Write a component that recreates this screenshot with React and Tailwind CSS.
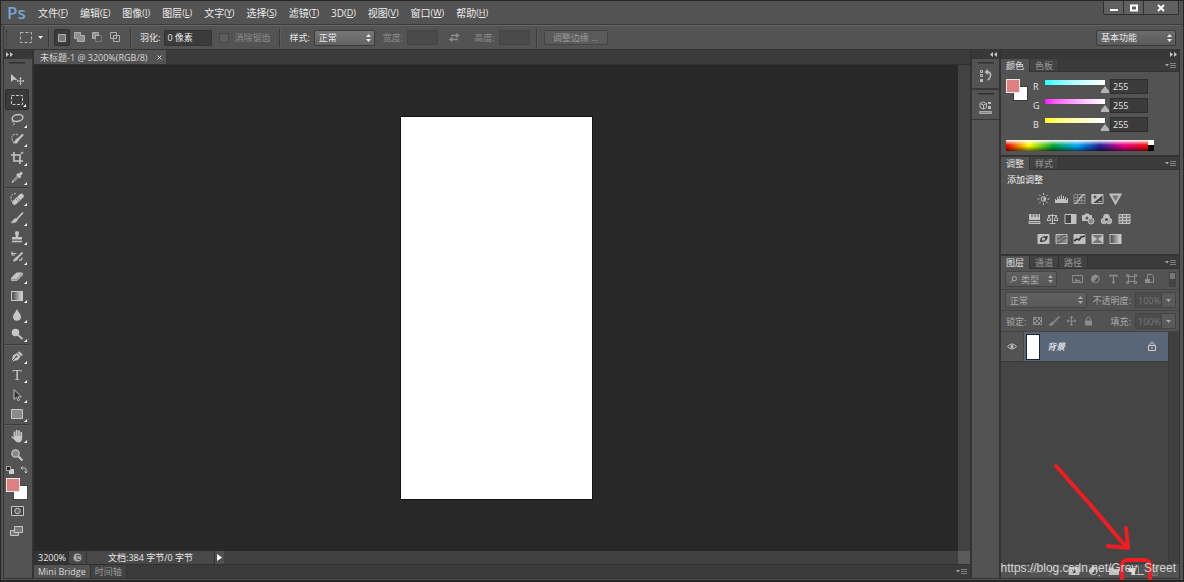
// src/App.jsx
import React, { useState } from 'react'

// ─── Shared bits ───

function Icon({ w = 14, h = 14, className = '', children }) {
  return (
    <svg
      width={w}
      height={h}
      viewBox={`0 0 ${w} ${h}`}
      fill="none"
      stroke="currentColor"
      className={`shrink-0 ${className}`}
      aria-hidden="true"
    >
      {children}
    </svg>
  )
}

function UpDown({ className = '' }) {
  return (
    <Icon w={5} h={8} className={className}>
      <path d="M0 3L2.5 0L5 3zM0 5L2.5 8L5 5z" fill="currentColor" stroke="none" />
    </Icon>
  )
}

function Select({ label, options, className = '', children }) {
  return (
    <div className={`relative flex h-4 items-center rounded-xs border border-[#3a3a3a] bg-linear-to-b ${className}`}>
      {children}
      <select aria-label={label} className="h-full w-full appearance-none bg-transparent pl-1 outline-none">
        {options.map(o => <option key={o}>{o}</option>)}
      </select>
      <UpDown className="pointer-events-none absolute right-[3px] top-[3px]" />
    </div>
  )
}

function PanelMenu() {
  return (
    <button aria-label="面板菜单" className="mr-[3px] ml-auto text-[#aaa]">
      <Icon w={11} h={7}>
        <path d="M0 2h4L2 4.5z" fill="currentColor" stroke="none" />
        <path d="M5 1.5h6M5 3.5h6M5 5.5h6" stroke="#808080" />
      </Icon>
    </button>
  )
}

function PanelTabs({ tabs }) {
  const [active, setActive] = useState(0)
  return (
    <div className="flex h-[13px] items-stretch border-b border-[#333] bg-[#3b3b3b]">
      {tabs.map((t, i) => (
        <button
          key={t}
          onClick={() => setActive(i)}
          className={
            i === active
              ? '-mb-px flex items-center border-r border-[#333] bg-[#535353] px-[5px] text-[#e4e4e4]'
              : 'flex items-center border-r border-[#333] bg-[#424242] px-[5px] text-[#999]'
          }
        >
          {t}
        </button>
      ))}
      <PanelMenu />
    </div>
  )
}

function Chevrons({ left }) {
  return (
    <Icon w={7} h={5} className="text-[#c4c4c4]">
      <path
        d={left ? 'M3 0L0 2.5L3 5zM7 0L4 2.5L7 5z' : 'M0 0L3 2.5L0 5zM4 0L7 2.5L4 5z'}
        fill="currentColor"
        stroke="none"
      />
    </Icon>
  )
}

function Grip() {
  return <div className="h-[2px] w-4 border-t border-b border-t-[#333] border-b-[#404040]" />
}

// ─── Menu bar ───

const menus = [
  ['文件', 'F'], ['编辑', 'E'], ['图像', 'I'], ['图层', 'L'], ['文字', 'Y'], ['选择', 'S'],
  ['滤镜', 'T'], ['3D', 'D'], ['视图', 'V'], ['窗口', 'W'], ['帮助', 'H'],
]

function MenuBar() {
  return (
    <header className="flex h-6 shrink-0 items-center border-b border-[#3c3c3c] pl-1.5">
      <span className="w-[31px] text-[17px] font-semibold text-[#76a5d8]">Ps</span>
      <nav className="flex flex-1 gap-3 text-[10px] text-[#ececec]">
        {menus.map(([name, key]) => (
          <button key={key} className="flex items-center whitespace-nowrap">
            {name}
            <span className="text-[9px]">(<u>{key}</u>)</span>
          </button>
        ))}
      </nav>
      <div className="mr-1 flex h-[14px] self-start rounded-b-xs border border-t-0 border-[#303030] bg-[#606060] text-white">
        <button aria-label="最小化" className="flex w-5 items-center justify-center border-r border-[#303030]">
          <Icon w={8} h={8}><path d="M0 6h8" strokeWidth="2" /></Icon>
        </button>
        <button aria-label="最大化" className="flex w-5 items-center justify-center border-r border-[#303030]">
          <Icon w={8} h={8}><path d="M1 1.5h6v5h-6z" strokeWidth="2" /></Icon>
        </button>
        <button aria-label="关闭" className="flex w-[34px] items-center justify-center">
          <Icon w={8} h={8}><path d="M1 1l6 6M7 1l-6 6" strokeWidth="2" /></Icon>
        </button>
      </div>
    </header>
  )
}

// ─── Options bar ───

function Divider({ className = '' }) {
  return <div className={`h-[18px] w-[2px] shrink-0 border-l border-[#3a3a3a] bg-[#5c5c5c] ${className}`} />
}

function OptionsBar() {
  return (
    <div className="mx-[2px] flex h-[25px] shrink-0 items-center border-t border-b border-l border-t-[#666] border-b-[#333] border-l-[#3a3a3a] pl-[2px] text-[#e8e8e8]">
      <div className="h-4 w-[2px] border-l border-dotted border-[#333]" />
      <button aria-label="矩形选框工具" className="ml-3 flex items-center gap-1.5">
        <Icon w={12} h={11}><path d="M.5 .5h11v10h-11z" stroke="#bbb" strokeDasharray="3 2" /></Icon>
        <Icon w={5} h={3}><path d="M0 0h5L2.5 3z" fill="currentColor" stroke="none" /></Icon>
      </button>
      <Divider className="ml-[5px]" />
      <div className="ml-1 flex items-center text-[#b0b0b0]">
        <button aria-label="新选区" className="flex h-[17px] w-4 items-center justify-center rounded-xs border border-[#2e2e2e] bg-[#3c3c3c]">
          <Icon w={8} h={8}><path d="M.5 .5h7v7h-7z" fill="#777" /></Icon>
        </button>
        <button aria-label="添加到选区" className="flex w-[18px] justify-center">
          <Icon w={11} h={11}><path d="M.5 .5h6v3h4v6h-7v-3h-3z" fill="#909090" /></Icon>
        </button>
        <button aria-label="从选区减去" className="flex w-[18px] justify-center">
          <Icon w={11} h={11}>
            <path d="M3.5 3.5h6v6h-6z" stroke="#777" />
            <path d="M.5 .5h6v3h-3v3h-3z" fill="#909090" />
          </Icon>
        </button>
        <button aria-label="与选区交叉" className="flex w-[18px] justify-center">
          <Icon w={11} h={11}><path d="M.5 .5h6v6h-6zM3.5 3.5h6v6h-6z" /></Icon>
        </button>
      </div>
      <Divider className="ml-1.5" />
      <label className="ml-2 flex items-center gap-1 whitespace-nowrap">
        羽化:
        <input defaultValue="0 像素" className="h-4 w-[48px] border border-[#333] bg-[#3b3b3b] pl-0.5 outline-none" />
      </label>
      <label className="ml-[7px] flex items-center gap-[5px] whitespace-nowrap text-[#8c8c8c]">
        <input type="checkbox" disabled className="h-2.5 w-2.5 appearance-none rounded-xs border border-[#444] bg-[#5c5c5c]" />
        消除锯齿
      </label>
      <Divider className="ml-[9px]" />
      <div className="ml-2 flex items-center gap-1 whitespace-nowrap">
        样式:
        <Select label="样式" options={['正常', '固定比例', '固定大小']} className="w-[61px] from-[#777] to-[#626262]" />
      </div>
      <label className="ml-2 flex items-center gap-1 whitespace-nowrap text-[#8c8c8c]">
        宽度:
        <input disabled className="h-[15px] w-[31px] border border-[#444] bg-[#4a4a4a]" />
      </label>
      <button aria-label="高度和宽度互换" className="ml-2.5 text-[#8c8c8c]">
        <Icon w={12} h={9}>
          <path d="M3 2.5h6M4 6.5h6" strokeWidth="1.3" />
          <path d="M8 0l4 2.5l-4 2.5zM4.500 4l-4 2.5l4 2.500z" fill="currentColor" stroke="none" />
        </Icon>
      </button>
      <label className="ml-3.5 flex items-center gap-1 whitespace-nowrap text-[#8c8c8c]">
        高度:
        <input disabled className="h-[15px] w-[31px] border border-[#444] bg-[#4a4a4a]" />
      </label>
      <Divider className="ml-1.5" />
      <button disabled className="ml-1.5 h-[15px] w-16 rounded-xs border border-[#444] bg-[#5a5a5a] text-[#999]">
        调整边缘 ...
      </button>
      <Select label="工作区" options={['基本功能', '绘画', '摄影']} className="mr-[5px] ml-auto w-20 from-[#6c6c6c] to-[#5a5a5a]" />
    </div>
  )
}

// ─── Tool box ───

const toolGroups = [
  {
    height: 'h-[117px]',
    tools: [
      ['移动', false, <>
        <path d="M1 1v8l2.5-2.3l4 .3z" fill="currentColor" stroke="none" />
        <path d="M10.5 4.5v7M7 8h7M9.5 5.5l1-1l1 1M9.5 10.5l1 1l1-1M8 7l-1 1l1 1M13 7l1 1l-1 1" strokeWidth=".9" />
      </>],
      ['矩形选框', true, <path d="M1.5 2.5h11v9h-11z" strokeDasharray="3 1.5" />],
      ['套索', true, <>
        <ellipse cx="7.5" cy="5" rx="5.5" ry="3.3" strokeWidth="1.4" transform="rotate(-12 7.5 5)" />
        <path d="M3.5 7.5c-2 .5-1 2 0 2s1 2-.5 3" />
      </>],
      ['快速选择', true, <>
        <path d="M8 3c-3-2-7 0-6 4s3 4 6 4" strokeDasharray="2 1" />
        <path d="M13 2.5L8.5 7" strokeWidth="2.2" />
        <path d="M9 7c-.5 3.5-3 4-5.500 3.800c2-1 2-3.800 4.500-4.300z" fill="currentColor" />
      </>],
      ['裁剪', true, <path d="M4 1v9h9M1 4h9v9M11 3l2-2" strokeWidth="1.6" />],
      ['吸管', true, <>
        <path d="M8 5.5L3 10.5l-1 2l2-1l5-5" />
        <path d="M7 4l3.5 3.5M9 5.5L12 2.5" strokeWidth="2.6" />
      </>],
    ],
  },
  {
    height: 'h-[155px]',
    tools: [
      ['污点修复画笔', true, <>
        <path d="M6 2c-3-1-5 1-5 4s1 4 2 4" strokeDasharray="2 1" />
        <path d="M4.5 10.5L11.5 4" strokeWidth="4.5" strokeLinecap="round" />
        <path d="M6 7l3 3M7.500 5.500l3 3" stroke="#555" strokeDasharray="1 1" />
      </>],
      ['画笔', true, <>
        <path d="M13 1.5L7 8" strokeWidth="1.8" />
        <path d="M7.5 8.5c-.5 3-3.5 3.5-6.5 3.2c2-.7 2-4 5-4.2z" fill="currentColor" strokeWidth=".6" />
      </>],
      ['仿制图章', true, <>
        <path d="M5 3a2 2 0 0 1 4 0c0 1-.8 2-.8 4h3.800v2.5H2V7h3.800c0-2-.8-3-.8-4z" fill="currentColor" stroke="none" />
        <path d="M2 11.5h10" strokeWidth="1.6" />
      </>],
      ['历史记录画笔', true, <>
        <path d="M12.5 2.5L8 7" strokeWidth="1.8" />
        <path d="M8.500 7c-1 3.5-3 4-5.500 3.800c2-1 2-3.800 5-4z" fill="currentColor" />
        <path d="M1.5 3.5h5M2 1.5v3.5h3M9 10.5c2 0 3-1 3-3" strokeWidth="1.200" />
      </>],
      ['橡皮擦', true, <>
        <path d="M1 9l5.5-5.5h6L7 9z" fill="currentColor" stroke="none" />
        <path d="M1.5 9v2.5H7L12.5 6V4L7 9.5H2" fill="#999" strokeWidth=".8" />
      </>],
      ['渐变', true, <>
        <rect x="1.5" y="2.5" width="11" height="9" fill="url(#toolGradient)" />
        <defs>
          <linearGradient id="toolGradient"><stop stopColor="#444" /><stop offset="1" stopColor="#ddd" /></linearGradient>
        </defs>
      </>],
      ['模糊', true, <path d="M7 1C6 4 3 6 3 8.800a4 4 0 0 0 8 0C11 6 8 4 7 1z" fill="currentColor" stroke="none" />],
      ['减淡', true, <>
        <circle cx="5.5" cy="5.5" r="3.8" fill="currentColor" stroke="none" />
        <path d="M8 8l4.5 4" strokeWidth="1.8" />
      </>],
    ],
  },
  {
    height: 'h-[78px]',
    tools: [
      ['钢笔', true, <>
        <path d="M1.5 12.5l1.5-6l4-2.5l3.5 3.5l-2.5 3.5z" fill="currentColor" stroke="none" />
        <path d="M2 12l4-4" stroke="#444" />
        <path d="M8.5 3l3.5 3.5" strokeWidth="2.2" />
        <circle cx="6.5" cy="7.5" r="1" fill="#444" stroke="none" />
      </>],
      ['横排文字', true, 'T'],
      ['路径选择', true, <path d="M4 1.5v10l2.5-2.2l1.5 3.5l1.5-.8l-1.5-3.2h3.3z" fill="#333" strokeWidth=".9" />],
      ['矩形', true, <path d="M1.5 2.5h11v9h-11z" fill="#8a8a8a" />],
    ],
  },
  {
    height: 'h-[38px]',
    tools: [
      ['抓手', true, <>
        <path d="M4.5 7V3M6.7 6V1.5M9 6V2M11.3 7V3.5" strokeWidth="1.7" strokeLinecap="round" />
        <path d="M3.7 6.5h8.4v3c0 2-1.5 4-3.5 4s-3-1-4-2.5L1 7.800l1.2-.6l1.7 1.3z" fill="currentColor" stroke="none" />
      </>],
      ['缩放', false, <>
        <circle cx="5.5" cy="5.5" r="3.7" fill="#888" strokeWidth="1.2" />
        <path d="M8.5 8.5l4 4" strokeWidth="2.2" />
      </>],
    ],
  },
]

function Tool({ name, more, active, onClick, children }) {
  return (
    <button
      aria-label={name}
      onClick={onClick}
      className={
        active
          ? 'relative flex min-h-0 w-6 flex-1 items-center justify-center rounded-xs border border-[#2c2c2c] bg-[#3a3a3a]'
          : 'relative flex min-h-0 w-6 flex-1 items-center justify-center'
      }
    >
      {children === 'T'
        ? <span className="w-[14px] font-['Liberation_Serif',serif] text-[15px]">T</span>
        : <Icon className={name === '移动' ? '' : '-ml-px'}>{children}</Icon>}
      {more && (
        <Icon w={3} h={3} className="absolute right-[2px] bottom-[2px] text-white">
          <path d="M3 0v3H0z" fill="currentColor" stroke="none" />
        </Icon>
      )}
    </button>
  )
}

function ToolBox() {
  const [tool, setTool] = useState('矩形选框')
  return (
    <aside className="flex w-[31px] shrink-0 flex-col border-r-2 border-l border-r-[#333] border-l-[#333] bg-[#535353]">
      <div className="flex h-[9px] items-center bg-[#383838] pl-[2px]"><Chevrons /></div>
      <div className="flex flex-col items-center pt-[3px] pr-[2px] text-[#c6c6c6]">
        <Grip />
        <div className="mt-1.5 flex flex-col">
          {toolGroups.map((g, i) => (
            <div key={g.height}>
              {i > 0 && <div className="h-[2px] border-t border-[#3a3a3a] bg-[#5e5e5e]" />}
              <div className={`flex flex-col items-center ${g.height}`}>
                {g.tools.map(([name, more, art]) => (
                  <Tool key={name} name={name} more={more} active={tool === name} onClick={() => setTool(name)}>
                    {art}
                  </Tool>
                ))}
              </div>
            </div>
          ))}
        </div>
        {/* Default / swap colours */}
        <div className="mt-0.5 flex w-full justify-between px-[2px]">
          <button aria-label="默认前景色和背景色">
            <Icon w={8} h={8}>
              <path d="M3 3h5v5h-5z" fill="#ccc" stroke="none" />
              <path d="M.5 .5h4v4h-4z" fill="#222" strokeWidth=".8" />
            </Icon>
          </button>
          <button aria-label="切换前景色和背景色">
            <Icon w={8} h={8}><path d="M1 2h3.5q1.5 0 1.5 1.5V7M2.5 .5L1 2l1.5 1.5M4.5 5.5L6 7l1.5-1.5" /></Icon>
          </button>
        </div>
        <div className="mt-1 grid h-[22px] w-[22px] grid-cols-[7px_7px_8px] grid-rows-[7px_7px_8px]">
          <button aria-label="背景色" className="col-span-2 col-start-2 row-span-2 row-start-2 border border-[#444] bg-white" />
          <button aria-label="前景色" className="z-10 col-span-2 col-start-1 row-span-2 row-start-1 border border-[#e8e8e8] bg-[#de8080]" />
        </div>
        <button aria-label="快速蒙版" className="mt-1.5">
          <Icon w={13} h={10}>
            <path d="M.5 .5h12v9h-12z" fill="#444" />
            <circle cx="6.5" cy="5" r="2.8" fill="#666" />
          </Icon>
        </button>
        <button aria-label="更改屏幕模式" className="mt-2.5">
          <Icon w={14} h={11}>
            <path d="M.5 4.5h8v5h-8z" fill="#777" />
            <path d="M4.5 .5h8v6h-8z" fill="#777" />
          </Icon>
        </button>
      </div>
    </aside>
  )
}

// ─── Document window ───

function DocumentArea() {
  return (
    <main className="flex min-w-0 flex-1 flex-col bg-[#3b3b3b]">
      <div className="flex h-[15px] shrink-0 border-b border-[#303030]">
        <div className="flex items-center gap-2.5 bg-[#535353] pr-1 pl-1.5 text-[#d8d8d8]">
          <span className="text-[9px] whitespace-nowrap">未标题-1 @ 3200%(RGB/8)</span>
          <button aria-label="关闭文档">
            <Icon w={5} h={5}><path d="M.5 .5l4 4M4.5 .5l-4 4" /></Icon>
          </button>
        </div>
      </div>
      <div className="flex flex-1">
        <div className="flex flex-1 items-center justify-center bg-[#282828]">
          <div className="h-[382px] w-[191px] bg-white ring-1 ring-[#141414]" />
        </div>
        <div className="w-3 bg-[#424242]" />
      </div>
      <div className="flex h-[13px] shrink-0 items-stretch text-[#e8e8e8]">
        <input aria-label="缩放比例" defaultValue="3200%" className="w-[35px] bg-[#333] pl-1 outline-none" />
        <div className="flex w-[18px] items-center justify-center border-r border-[#333] bg-[#484848]">
          <Icon w={9} h={9}>
            <circle cx="4.5" cy="4.5" r="4" fill="#aaa" stroke="none" />
            <path d="M4 2v4.5h3M4 2.5h3v2" stroke="#555" />
          </Icon>
        </div>
        <div className="flex w-[127px] items-center justify-center bg-[#484848]">文档:384 字节/0 字节</div>
        <button aria-label="状态栏选项" className="flex w-2.5 items-center justify-center border-l border-[#333] bg-[#505050]">
          <Icon w={5} h={7}><path d="M0 0L5 3.5L0 7z" fill="#fff" stroke="none" /></Icon>
        </button>
        <div className="flex-1 bg-[#414141]" />
        <div className="w-3 bg-[#5a5a5a]" />
      </div>
      <div className="flex h-[14px] shrink-0 items-stretch border-t border-[#303030]">
        <button className="bg-[#535353] px-1 whitespace-nowrap text-[#d8d8d8]">Mini Bridge</button>
        <button className="border-r border-l border-[#303030] bg-[#424242] px-1 whitespace-nowrap text-[#999]">时间轴</button>
        <PanelMenu />
      </div>
    </main>
  )
}

// ─── Collapsed dock ───

function IconDock() {
  return (
    <aside className="flex w-[31px] shrink-0 flex-col border-r-2 border-l-2 border-[#333] text-[#bbb]">
      <div className="flex h-[9px] items-center justify-end bg-[#383838] pr-[2px]"><Chevrons left /></div>
      <div className="flex h-[31px] flex-col items-center border-b-2 border-[#383838] pt-[3px]">
        <Grip />
        <button aria-label="历史记录" className="mt-[5px]">
          <Icon w={13} h={14}>
            <path d="M1.5 1.5h2v2h-2zM1.5 5.5h2v2h-2z" />
            <path d="M1 10h3v3h-3z" fill="currentColor" stroke="none" />
            <path d="M8 3h1.500q2.500 1 2 4t-3 4" strokeWidth="1.500" />
            <path d="M9 0v6L5.500 3z" fill="currentColor" stroke="none" />
          </Icon>
        </button>
      </div>
      <div className="flex h-[30px] flex-col items-center border-b border-[#383838] pt-[3px]">
        <Grip />
        <button aria-label="属性" className="mt-1.5">
          <Icon w={13} h={13}>
            <path d="M1 2.5l3.5-1.5l3 1.5v4L4.5 8L1 6.5zM1 2.5l3.5 1.5l3-1.5M4.5 4v4" />
            <path d="M9 1h3v2h-3zM9 5h3v3h-3z" fill="currentColor" stroke="none" />
            <path d="M.5 10.5h12v2h-12z" fill="#888" strokeWidth=".8" />
          </Icon>
        </button>
      </div>
    </aside>
  )
}

// ─── Colour panel ───

const channels = [
  ['R', 'bg-linear-to-r from-[#0ff] to-white'],
  ['G', 'bg-linear-to-r from-[#f0f] to-white'],
  ['B', 'bg-linear-to-r from-[#ff0] to-white'],
]

function Channel({ name, track }) {
  const [value, setValue] = useState(255)
  return (
    <div className="flex h-[15px] items-center">
      <span className="w-3">{name}</span>
      <input
        type="range"
        aria-label={name}
        min="0"
        max="255"
        value={value}
        onChange={e => setValue(Number(e.target.value))}
        className={`h-[14px] w-16 appearance-none bg-[length:60px_5px] bg-no-repeat outline-none [&::-webkit-slider-thumb]:mt-1.5 [&::-webkit-slider-thumb]:h-[7px] [&::-webkit-slider-thumb]:w-2 [&::-webkit-slider-thumb]:appearance-none [&::-webkit-slider-thumb]:bg-[#b4b4b4] [&::-webkit-slider-thumb]:[clip-path:polygon(50%_0,100%_70%,100%_100%,0_100%,0_70%)] ${track}`}
      />
      <input
        aria-label={`${name} 值`}
        value={value}
        onChange={e => setValue(Number(e.target.value) || 0)}
        className="ml-px h-[15px] w-[38px] border border-[#2e2e2e] bg-[#3b3b3b] pl-0.5 outline-none"
      />
    </div>
  )
}

function ColorPanel() {
  return (
    <section className="border-b-2 border-[#333]">
      <PanelTabs tabs={['颜色', '色板']} />
      <div className="pt-[7px] pr-1 pb-1 pl-[5px] text-[#e4e4e4]">
        <div className="flex gap-[5px]">
          <div className="grid h-[22px] w-[22px] grid-cols-[7px_7px_8px] grid-rows-[7px_7px_8px]">
            <button aria-label="背景色" className="col-span-2 col-start-2 row-span-2 row-start-2 border border-[#3a3a3a] bg-white" />
            <button aria-label="前景色" className="z-10 col-span-2 col-start-1 row-span-2 row-start-1 border border-[#e8e8e8] bg-[#de8080]" />
          </div>
          <div className="flex flex-col gap-1">
            {channels.map(([name, track]) => <Channel key={name} name={name} track={track} />)}
          </div>
        </div>
        <div className="mt-2 flex h-[11px] w-[148px]">
          <div className="flex-1 bg-[linear-gradient(to_bottom,#fff,#ffffff00_45%,#0000_55%,#0009),linear-gradient(to_right,#e00,#ff0_16%,#0a3_33%,#0af_50%,#229_66%,#e08_83%,#e10)]" />
          <div className="w-1.5 bg-[linear-gradient(#fff_50%,#000_50%)]" />
        </div>
      </div>
    </section>
  )
}

// ─── Adjustments panel ───

const adjustments = [
  [
    ['亮度/对比度', <>
      <circle cx="6.5" cy="6" r="2.3" />
      <path d="M6.5 3.7a2.3 2.3 0 0 1 0 4.6z" fill="currentColor" stroke="none" />
      <path d="M6.5 0v2M6.5 10v2M.5 6h2M10.5 6h2M2.3 1.8l1.4 1.4M9.3 8.800l1.4 1.4M10.7 1.8L9.3 3.2M3.7 8.800l-1.4 1.4" />
    </>],
    ['色阶', <path d="M0 10V6h1v1h1V4h1v2h1V3h1v3h1V2h1v4h1V3h1v3h1V4h1v3h1V5h1v5z" fill="currentColor" stroke="none" />],
    ['曲线', <>
      <path d="M1 1.5h11v9H1zM4.5 1.5v9M8.5 1.5v9M1 4.5h11M1 7.5h11" stroke="#8a8a8a" />
      <path d="M1 10.5c6 0 5-9 11-9" strokeWidth="1.4" />
    </>],
    ['曝光度', <>
      <path d="M1 1.5h11v9H1z" fill="#444" />
      <path d="M1 1.5h11L1 10.5z" fill="currentColor" />
      <path d="M2.5 4h3M4 2.5v3" stroke="#333" /><path d="M7.5 8.5h3" />
    </>],
    ['自然饱和度', <path d="M1.5 1.5h10l-5 9z" fill="#777" strokeWidth="1.8" />],
  ],
  [
    ['色相/饱和度', <>
      <path d="M1 1h11v6H1z" fill="currentColor" stroke="none" />
      <path d="M4 1v3M7 1v3M10 1v3" stroke="#555" />
      <path d="M1 8.5h11v2H1z" fill="#777" />
    </>],
    ['色彩平衡', <path d="M6.5 1v9M3.5 10.5h6M2 2.5h9M3 3L1 7.5h4zM10 3L8 7.5h4z" />],
    ['黑白', <><path d="M1 1.5h11v9H1z" fill="#444" /><path d="M7 2h5v8H7z" fill="currentColor" stroke="none" /></>],
    ['照片滤镜', <>
      <path d="M.5 2.5h2l1-1.5h3l1 1.5h2v5h-9z" fill="currentColor" />
      <circle cx="5" cy="5" r="1.5" fill="#555" stroke="none" />
      <circle cx="9" cy="8" r="3" fill="#888" />
    </>],
    ['通道混合器', <>
      <circle cx="6.5" cy="4" r="2.8" fill="currentColor" />
      <circle cx="4" cy="8" r="2.8" fill="#aaa" /><circle cx="9" cy="8" r="2.8" fill="#aaa" />
      <circle cx="6.5" cy="6.5" r="1.3" fill="#333" stroke="none" />
    </>],
    ['颜色查找', <path d="M1 1.5h11v9H1zM4.5 1.5v9M8.5 1.5v9M1 4.5h11M1 7.5h11" fill="#777" />],
  ],
  [
    ['反相', <>
      <path d="M1 1.5h11v9H1z" fill="currentColor" />
      <path d="M3 9c0-5 2-6 8-6c-1 5-3 6-8 6z" fill="#444" stroke="none" />
      <circle cx="6.5" cy="6" r="1.5" fill="currentColor" stroke="none" />
    </>],
    ['色调分离', <>
      <path d="M1 1.5h11v9H1z" fill="#888" />
      <path d="M2 6l3-1l2-2l4-1M2 10l4-1l2-3l4-1" strokeWidth="1.2" stroke="#555" />
    </>],
    ['阈值', <><path d="M1 1.5h11v9H1z" fill="currentColor" /><path d="M1 8l3-2l2 1l2-3l4-1" stroke="#333" strokeWidth="1.6" /></>],
    ['可选颜色', <>
      <path d="M1 1.5h11v9H1z" fill="#777" />
      <path d="M1 2l5 4l-5 4zM12 2l-5 4l5 4z" fill="currentColor" stroke="none" />
    </>],
    ['渐变映射', <rect x="1" y="1.5" width="11" height="9" fill="url(#toolGradient)" />],
  ],
]

function AdjustmentsPanel() {
  return (
    <section className="border-b-2 border-[#333]">
      <PanelTabs tabs={['调整', '样式']} />
      <div className="flex flex-col gap-2 pt-[5px] pb-[9px] text-[#c0c0c0]">
        <h2 className="h-2.5 pl-1.5 text-[#f0f0f0]">添加调整</h2>
        {adjustments.map((row, i) => (
          <div key={i} className="flex justify-center gap-[5px] pr-[22px]">
            {row.map(([name, art]) => (
              <button key={name} aria-label={name}><Icon w={13} h={12}>{art}</Icon></button>
            ))}
          </div>
        ))}
      </div>
    </section>
  )
}

// ─── Layers panel ───

function Percent({ label }) {
  return (
    <label className="ml-auto flex items-center gap-1 whitespace-nowrap">
      {label}:
      <span className="flex">
        <input disabled defaultValue="100%" className="h-4 w-[27px] border border-[#444] bg-[#4b4b4b] pl-0.5 text-[#777]" />
        <span className="flex h-4 w-[14px] items-center justify-center border border-l-0 border-[#444] bg-[#5a5a5a]">
          <Icon w={5} h={3}><path d="M0 0h5L2.5 3z" fill="currentColor" stroke="none" /></Icon>
        </span>
      </span>
    </label>
  )
}

const filters = [
  ['像素图层', <><path d="M.5 1.5h10v7h-10z" /><path d="M2 7.5l2-3l2 2l1-1l2 2z" fill="currentColor" stroke="none" /></>],
  ['调整图层', <><circle cx="5.5" cy="5" r="3.8" /><path d="M3 8a3.8 3.8 0 0 1 5-6z" fill="currentColor" /></>],
  ['文字图层', <path d="M2 3V1.5h7V3M5.5 1.5v7M4 8.5h3" strokeWidth="1.3" />],
  ['形状图层', <path d="M2.5 2.5h6v5h-6zM.5 .5h2v2h-2zM8.5 .5h2v2h-2zM.5 7.5h2v2h-2zM8.5 7.5h2v2h-2z" />],
  ['智能对象', <><path d="M3.5 .5h4l2 2v6h-6z" /><path d="M1 5h5v4h-5z" fill="currentColor" stroke="none" /></>],
]

const locks = [
  ['锁定透明像素', <>
    <path d="M1.5 1.5h8v7h-8z" />
    <path d="M2 2h2v2H2zM6 2h2v2H6zM4 4h2v2H4zM8 4h1v2H8zM2 6h2v2H2zM6 6h2v2H6z" fill="currentColor" stroke="none" />
  </>],
  ['锁定图像像素', <><path d="M10.5 .5L5 6" strokeWidth="1.4" /><path d="M5 6.5c0 2-2 3-5 2.5c2-.5 2-3 4-3z" fill="currentColor" /></>],
  ['锁定位置', <path d="M5.5 .5v9M1 5h9M4 2l1.5-1.5L7 2M4 8l1.5 1.5L7 8M2.5 3.5L1 5l1.5 1.5M8.5 3.5L10 5L8.5 6.5" />],
  ['锁定全部', <><path d="M2 4.5h7v5H2z" fill="currentColor" stroke="none" /><path d="M3.5 4.5V3a2 2 0 0 1 4 0v1.5" /></>],
]

const layerActions = [
  ['链接图层', 'text-[#777]', <path d="M5 3.5H3a2 2 0 0 0 0 4h2M7 3.5h2a2 2 0 0 1 0 4H7M4 5.5h4" />],
  ['图层样式', 'text-[#777]', <path d="M1 10.5q2 0 2.5-4T6 2M2 5.5h4M6 6l4 4M10 6l-4 4" />],
  ['添加蒙版', 'text-[#c0c0c0]', <><path d="M1 2.5h10v7H1z" fill="currentColor" /><circle cx="6" cy="6" r="2" fill="#444" stroke="none" /></>],
  ['创建调整图层', 'text-[#c0c0c0]', <>
    <circle cx="5.5" cy="6" r="3.8" />
    <path d="M3 9a3.8 3.8 0 0 1 5-6z" fill="currentColor" />
    <path d="M10 10h2v2z" fill="currentColor" stroke="none" />
  </>],
  ['创建组', 'text-[#c0c0c0]', <path d="M1 2.5h4l1 1.5h5v6H1z" fill="currentColor" stroke="none" />],
  ['创建新图层', 'text-[#e0e0e0]', <>
    <path d="M5.5 1.5h5v8h-7V6" stroke="#999" />
    <path d="M3 3h4v7H4V7z" fill="currentColor" stroke="none" />
    <path d="M0 4h4v3H1z" fill="currentColor" stroke="none" />
  </>],
  ['删除图层', 'text-[#777]', <path d="M2.5 3.5h7v7h-7zM1.5 2.5h9M5 4v6M7 4v6" />],
]

function LayersPanel() {
  return (
    <section className="flex flex-1 flex-col">
      <PanelTabs tabs={['图层', '通道', '路径']} />
      <div className="flex h-[21px] items-center border-b border-[#444] pr-[3px] pl-1 text-[#aaa]">
        <Select label="图层滤镜" options={['类型', '名称', '效果']} className="w-[52px] border-[#444] from-[#606060] to-[#585858] pl-1">
          <Icon w={7} h={7}><circle cx="4.3" cy="2.7" r="2.2" /><path d="M2.7 4.3L.5 6.5" /></Icon>
        </Select>
        <div className="ml-[15px] flex gap-[7px] text-[#8c8c8c]">
          {filters.map(([name, art]) => (
            <button key={name} aria-label={name}><Icon w={11} h={10}>{art}</Icon></button>
          ))}
        </div>
        <button aria-label="图层滤镜开关" className="ml-auto h-[15px] w-[7px] border border-[#444] bg-[linear-gradient(#777_45%,#444_45%)]" />
      </div>
      <div className="flex h-[21px] items-center border-b border-[#444] pr-[3px] pl-1 text-[#aaa]">
        <Select label="混合模式" options={['正常', '溶解', '变暗']} className="w-[82px] border-[#444] from-[#606060] to-[#585858]" />
        <Percent label="不透明度" />
      </div>
      <div className="flex h-[21px] items-center border-b border-[#444] pr-[3px] pl-[5px] text-[#aaa]">
        <span>锁定:</span>
        <div className="ml-1.5 flex gap-[6px] text-[#8c8c8c]">
          {locks.map(([name, art]) => (
            <button key={name} aria-label={name}><Icon w={11} h={10}>{art}</Icon></button>
          ))}
        </div>
        <Percent label="填充" />
      </div>
      <div className="flex flex-1">
        <div className="flex-1 bg-[#454545]">
          <div className="flex h-[30px] items-stretch border-b border-[#3a3a3a] bg-[#535353]">
            <button aria-label="指示图层可见性" className="flex w-[23px] items-center justify-center border-r border-[#444] text-[#c4c4c4]">
              <Icon w={10} h={7}>
                <path d="M.5 3.5q4.5-5 9 0q-4.5 5-9 0z" />
                <circle cx="5" cy="3.5" r="1.5" fill="currentColor" stroke="none" />
              </Icon>
            </button>
            <div className="flex flex-1 items-center bg-[#596678] pr-3 pl-[3px] text-white">
              <div className="h-6 w-3 bg-white ring-1 ring-[#222]" />
              <span className="ml-2 italic">背景</span>
              <Icon w={8} h={9} className="ml-auto text-[#d0d0d0]">
                <path d="M.5 3.5h7v5h-7zM2 3.5V2.5a2 2 0 0 1 4 0v1M4 5v2" />
              </Icon>
            </div>
          </div>
        </div>
        <div className="w-[11px] border-l border-[#3a3a3a] bg-[#3f3f3f]" />
      </div>
      <div className="flex h-[15px] shrink-0 items-center justify-center gap-2 border-t border-[#3a3a3a] pl-2">
        {layerActions.map(([name, tone, art]) => (
          <button key={name} aria-label={name} className={tone}><Icon w={12} h={12}>{art}</Icon></button>
        ))}
      </div>
    </section>
  )
}

// ─── Annotations drawn over the window ───

function Annotations() {
  return (
    <div className="pointer-events-none absolute right-0 bottom-0 z-20">
      <svg width="184" height="132" viewBox="0 0 184 132" fill="none" stroke="#f01c22" strokeWidth="4" strokeLinecap="round" strokeLinejoin="round">
        <path d="M57 18L89 54L128 100" />
        <path d="M127 80l2 20l-20-2" />
        <rect x="123" y="112" width="28" height="26" rx="5" />
      </svg>
      <span className="absolute right-[7px] bottom-1.5 font-['Liberation_Sans',Arial,sans-serif] text-[12px] leading-3 text-[#d4d4d4]">
        https://blog.csdn.net/Grey_Street
      </span>
    </div>
  )
}

export default function App() {
  return (
    <div className="relative flex h-screen min-h-[580px] flex-col overflow-hidden border border-b-2 border-[#262626] bg-[#535353] font-['Open_Sans','Noto_Sans_CJK_SC',sans-serif] text-[9px] leading-none">
      <MenuBar />
      <OptionsBar />
      <div className="mr-[3px] mb-px ml-[2px] flex min-h-0 flex-1 border-b border-[#333]">
        <ToolBox />
        <DocumentArea />
        <IconDock />
        <aside className="flex w-[179px] shrink-0 flex-col border-r border-[#333]">
          <div className="flex h-[9px] shrink-0 items-center justify-end bg-[#383838] pr-[2px]"><Chevrons /></div>
          <ColorPanel />
          <AdjustmentsPanel />
          <LayersPanel />
        </aside>
      </div>
      <Annotations />
    </div>
  )
}
